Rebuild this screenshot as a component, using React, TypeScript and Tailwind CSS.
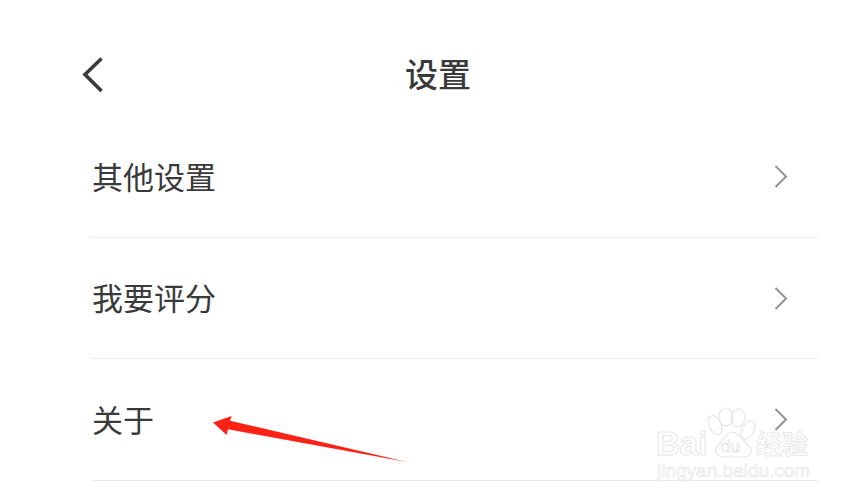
const rows = ["其他设置", "我要评分", "关于"];

function Chevron() {
  return (
    <svg width="16" height="26" viewBox="0 0 16 26" fill="none" className="mr-[29px]">
      <path d="M2.5 3 L13 13.5 L2.5 24" stroke="#929292" strokeWidth="2" />
    </svg>
  );
}

export default function App() {
  return (
    <div
      className="relative w-[856px] h-[500px] overflow-hidden bg-white text-[#3a3a3a]"
      style={{ fontFamily: '"Noto Sans CJK SC", "Liberation Sans", sans-serif' }}
    >
      <header className="flex h-[116px] items-center pl-[80px] pt-[34px]">
        <svg width="26" height="38" viewBox="0 0 26 38" fill="none" className="shrink-0">
          <path d="M21.5 2.5 L5 18.5 L21.5 35" stroke="#3a3a3a" strokeWidth="3.6" />
        </svg>
        <h1 className="w-[664px] pb-[4px] text-center text-[33px] font-medium leading-none">设置</h1>
      </header>
      <div className="ml-[91px] w-[727px]">
        {rows.map((r) => (
          <div key={r} className="flex h-[121.5px] items-center justify-between border-b border-[#ececec]">
            <span className="pb-[2px] pl-[1px] text-[31px] leading-none">{r}</span>
            <Chevron />
          </div>
        ))}
      </div>
      <svg width="856" height="500" viewBox="0 0 856 500" className="absolute left-0 top-0">
        <polygon points="213,422.5 231.7,416 230,420.7 407,462 228,429.3 226.7,435" fill="#fe2216" />
      </svg>
      <div className="absolute left-[656px] top-[408px] w-[180px] h-[90px]">
        <svg width="60" height="60" viewBox="0 0 60 60" fill="none" stroke="#e6e6e6" strokeWidth="1.2" className="absolute left-[48px] top-[-4px]">
          <ellipse cx="11" cy="21" rx="6" ry="10" transform="rotate(-25 11 21)" />
          <ellipse cx="22" cy="13" rx="7" ry="9" />
          <ellipse cx="34" cy="14" rx="7" ry="9" transform="rotate(10 34 14)" />
          <ellipse cx="44" cy="26" rx="6" ry="10" transform="rotate(30 44 26)" />
          <path d="M28 28 C35 28 38 36 44 41 C50 47 47 53 40 53 L20 53 C12 53 9 47 14 41 C20 37 22 28 28 28 Z" />
        </svg>
        <span className="absolute left-[0px] top-[19px] text-[33px] font-bold leading-none text-transparent [-webkit-text-stroke:1px_#e6e6e6]" style={{ fontFamily: '"Liberation Sans", sans-serif' }}>Bai</span>
        <span className="absolute left-[65px] top-[30px] text-[17px] leading-none text-transparent [-webkit-text-stroke:0.8px_#e6e6e6]" style={{ fontFamily: '"Liberation Sans", sans-serif' }}>du</span>
        <span className="absolute left-[100px] top-[22px] text-[26px] font-bold leading-none text-transparent [-webkit-text-stroke:0.8px_#e6e6e6]">经验</span>
        <span className="absolute left-[1px] top-[53px] text-[19px] leading-none text-transparent [-webkit-text-stroke:0.7px_#e6e6e6]" style={{ fontFamily: '"Liberation Sans", sans-serif' }}>jingyan.baidu.com</span>
      </div>
    </div>
  );
}
